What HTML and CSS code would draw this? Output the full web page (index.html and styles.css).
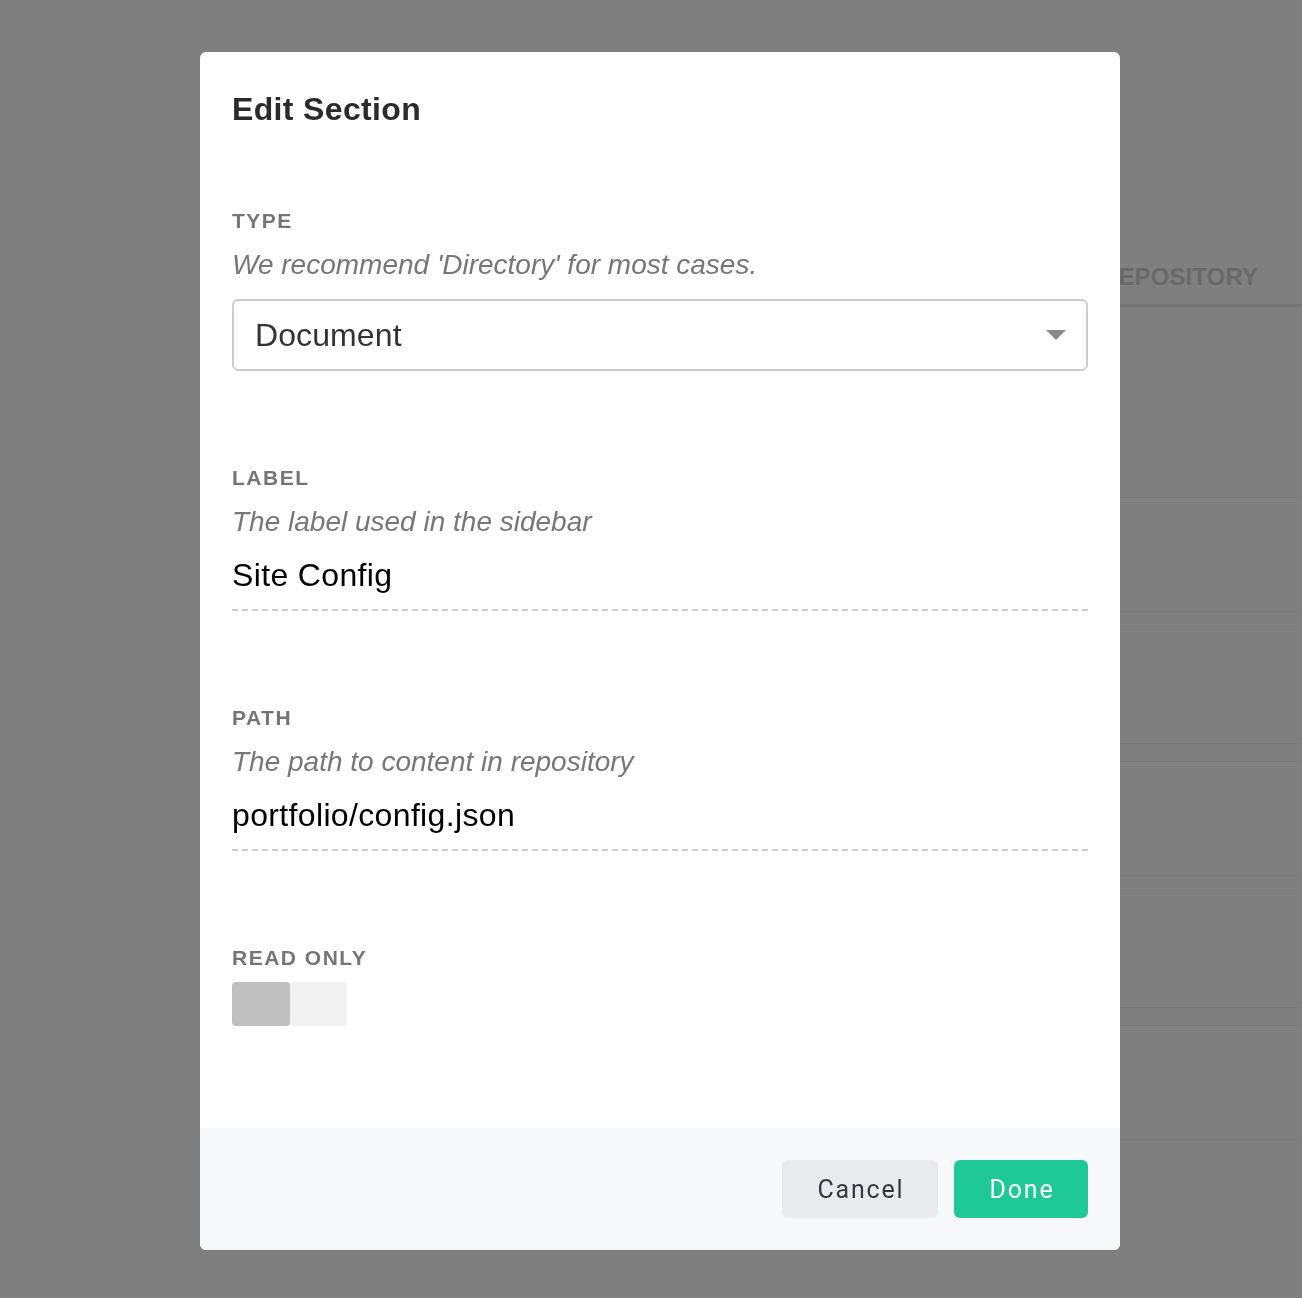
FILE: index.html
```html
<!DOCTYPE html>
<html lang="en">
<head>
<meta charset="utf-8">
<title>Edit Section</title>
<link rel="stylesheet" href="styles.css">
</head>
<body>
<div class="page">
  <div class="table">
    <div class="table-head">REPOSITORY</div>
    <div class="table-intro"></div>
    <div class="table-row"></div>
    <div class="table-row"></div>
    <div class="table-row"></div>
    <div class="table-row"></div>
    <div class="table-row"></div>
  </div>
</div>
<div class="overlay">
  <div class="modal">
    <div class="modal-body">
      <h1 class="modal-title">Edit Section</h1>

      <div class="field">
        <div class="field-label">TYPE</div>
        <div class="field-help">We recommend 'Directory' for most cases.</div>
        <div class="select">
          <span class="select-value">Document</span>
          <svg class="select-arrow" width="20" height="10" viewBox="0 0 20 10"><path d="M0 0H20L10 10Z" fill="#888"/></svg>
        </div>
      </div>

      <div class="field">
        <div class="field-label">LABEL</div>
        <div class="field-help">The label used in the sidebar</div>
        <div class="text-input">Site Config</div>
      </div>

      <div class="field">
        <div class="field-label">PATH</div>
        <div class="field-help">The path to content in repository</div>
        <div class="text-input">portfolio/config.json</div>
      </div>

      <div class="field">
        <div class="field-label">READ ONLY</div>
        <div class="toggle"><span class="toggle-knob"></span></div>
      </div>
    </div>
    <div class="modal-footer">
      <button class="btn btn-cancel">Cancel</button>
      <button class="btn btn-done">Done</button>
    </div>
  </div>
</div>
</body>
</html>
```
FILE: styles.css
```css
html, body {
  margin: 0;
  padding: 0;
}
body {
  width: 1302px;
  height: 1298px;
  overflow: hidden;
  background: #ffffff;
  font-family: "Liberation Sans", Arial, sans-serif;
}

/* Background page */
.page {
  height: 1298px;
  background: #fff;
}
.table {
  margin-left: 1101px;
  padding-top: 262px;
}
.table-head {
  font-size: 24px;
  font-weight: 700;
  letter-spacing: 0.1px;
  color: #d2d2d2;
  line-height: 30px;
  padding-bottom: 12px;
  border-bottom: 3px solid #eeeeee;
}
.table-intro {
  height: 190px;
  border-bottom: 1px solid #eeeeee;
}
.table-row {
  height: 113px;
  border-bottom: 1px solid #eeeeee;
  margin-bottom: 17px;
}
.table-row + .table-row {
  border-top: 1px solid #eeeeee;
}

/* Overlay + modal */
.overlay {
  position: fixed;
  inset: 0;
  background: rgba(0, 0, 0, 0.5);
  padding: 52px 0 0 200px;
}
.modal {
  width: 920px;
  background: #fff;
  border-radius: 6px;
  overflow: hidden;
}
.modal-body {
  padding: 37px 32px 102px;
}
.modal-title {
  margin: 0;
  font-size: 32px;
  line-height: 40px;
  font-weight: 700;
  letter-spacing: 0.35px;
  color: #2b2b2b;
}
.field {
  margin-top: 80px;
}
.field + .field {
  margin-top: 95px;
}
.field-label {
  font-size: 21px;
  line-height: 24px;
  font-weight: 700;
  letter-spacing: 1.5px;
  color: #757575;
}
.field-help {
  margin-top: 14px;
  font-size: 28px;
  line-height: 36px;
  font-style: italic;
  color: #777777;
}
.select {
  margin-top: 16px;
  height: 68px;
  border: 2px solid #cccccc;
  border-radius: 6px;
  display: flex;
  align-items: center;
  justify-content: space-between;
  padding: 0 20px 0 21px;
}
.select-value {
  font-size: 32px;
  letter-spacing: 0.1px;
  color: #333333;
}
.select-arrow {
  display: block;
}
.text-input {
  margin-top: 15px;
  font-size: 32px;
  line-height: 40px;
  letter-spacing: 0.35px;
  color: #000;
  padding-bottom: 16px;
  background-image: repeating-linear-gradient(to right, #cccccc 0 6px, transparent 6px 10px);
  background-size: 100% 2px;
  background-position: left bottom;
  background-repeat: no-repeat;
}
.toggle {
  margin-top: 12px;
  width: 115px;
  height: 44px;
  border-radius: 4px;
  background: #f2f2f2;
  display: flex;
}
.toggle-knob {
  width: 58px;
  height: 44px;
  border-radius: 4px;
  background: #c0c0c0;
}

.modal-footer {
  background: #f7f8fa;
  padding: 32px;
  display: flex;
  justify-content: flex-end;
  gap: 16px;
}
.btn {
  height: 58px;
  border: none;
  border-radius: 6px;
  font-family: Roboto, "Liberation Sans", sans-serif;
  font-size: 25px;
  letter-spacing: 1.8px;
  padding: 0 0 0 2px;
  cursor: pointer;
}
.btn-cancel {
  width: 156px;
  background: #e8ebee;
  color: #35383d;
}
.btn-done {
  width: 134px;
  background: #1fc997;
  color: #ffffff;
}
```
